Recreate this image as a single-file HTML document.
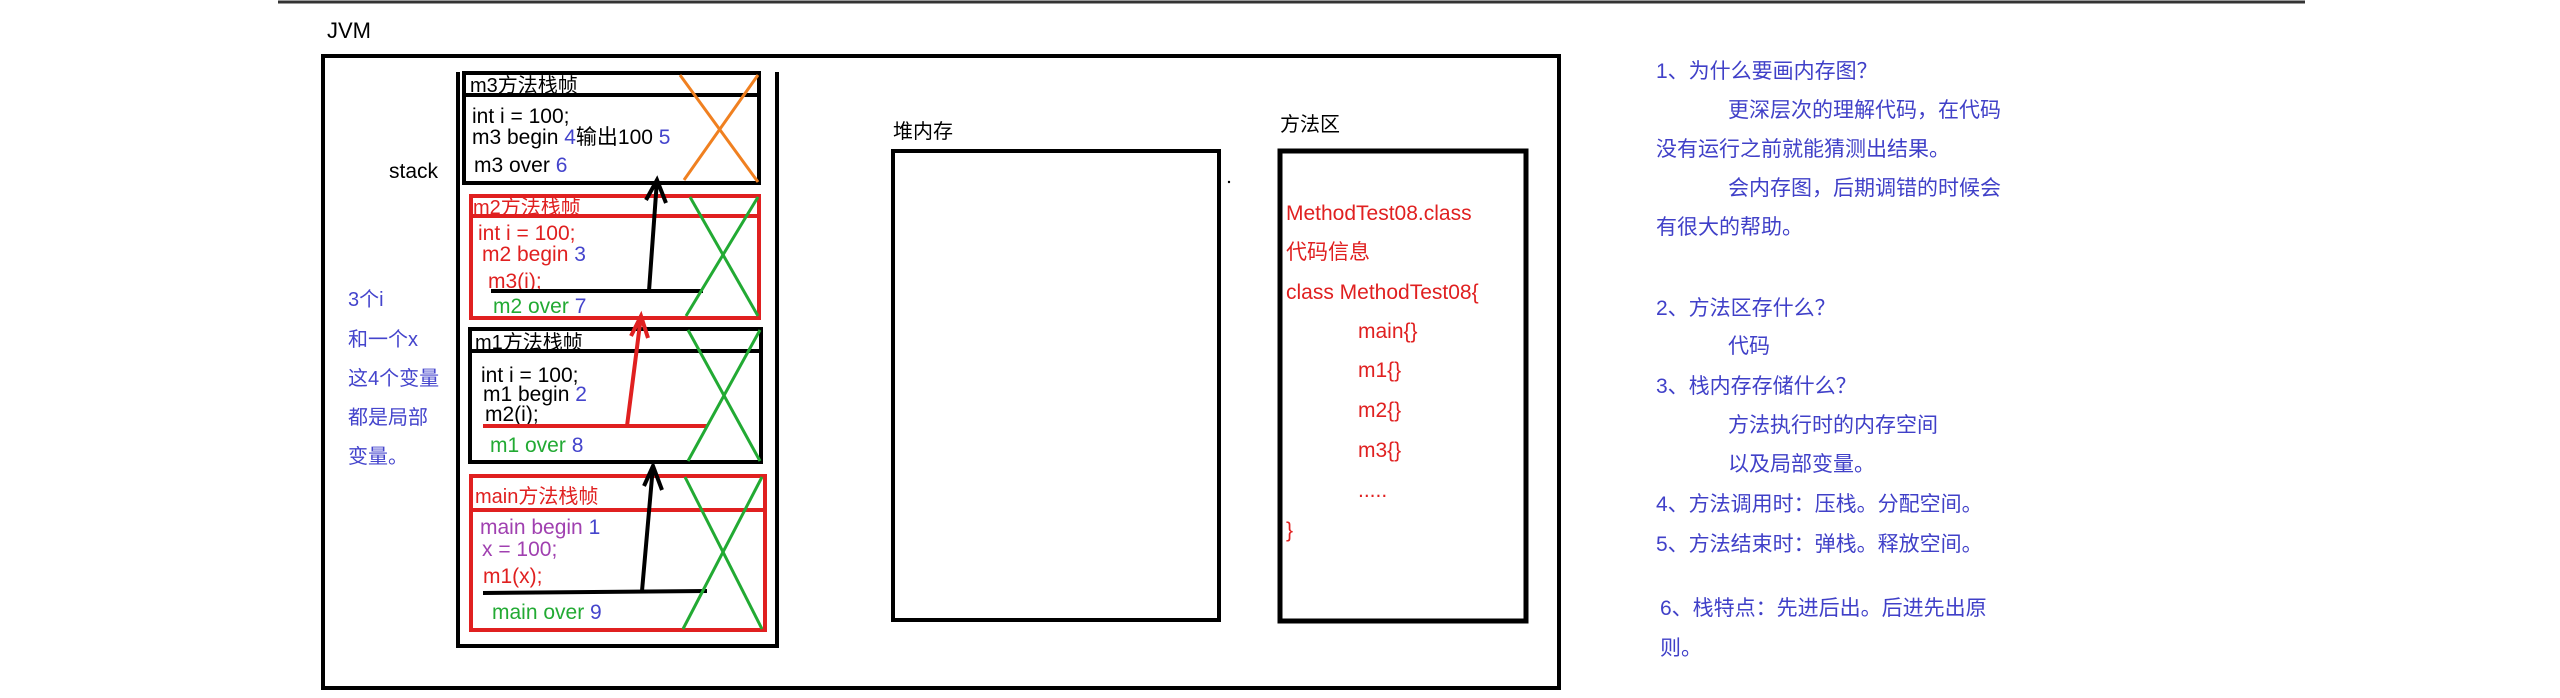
<!DOCTYPE html>
<html><head><meta charset="utf-8"><style>
html,body{margin:0;padding:0;background:#fff;}
svg{display:block}
text{font-family:"Liberation Sans","Noto Sans CJK SC",sans-serif;}
</style></head><body>
<svg width="2560" height="698" viewBox="0 0 2560 698" xmlns="http://www.w3.org/2000/svg">
<line x1="278" y1="2" x2="2305" y2="2" stroke="#333" stroke-width="3"/>
<text x="327" y="38" font-size="22" fill="#000">JVM</text>
<rect x="323" y="56" width="1236" height="632" fill="none" stroke="#000" stroke-width="4"/>
<polyline points="458,72 458,646 777,646 777,72" fill="none" stroke="#000" stroke-width="4"/>
<text x="389" y="178" font-size="21" fill="#000">stack</text>
<rect x="464" y="73" width="295" height="110" fill="none" stroke="#000" stroke-width="4"/>
<line x1="464" y1="95" x2="759" y2="95" stroke="#000" stroke-width="4"/>
<text x="470" y="92" font-size="20" fill="#000">m3方法栈帧</text>
<text x="472" y="123" font-size="21" fill="#000">int i = 100;</text>
<text x="472" y="144" font-size="21" fill="#000">m3 begin <tspan fill="#4444cc">4</tspan>输出100 <tspan fill="#4444cc">5</tspan></text>
<text x="474" y="172" font-size="21" fill="#000">m3 over  <tspan fill="#4444cc">6</tspan></text>
<line x1="680" y1="75" x2="758" y2="182" stroke="#f08020" stroke-width="3"/>
<line x1="758" y1="75" x2="684" y2="180" stroke="#f08020" stroke-width="3"/>
<rect x="471" y="196" width="288" height="122" fill="none" stroke="#e02020" stroke-width="4"/>
<line x1="471" y1="216" x2="759" y2="216" stroke="#e02020" stroke-width="4"/>
<text x="473" y="214" font-size="20" fill="#e02020">m2方法栈帧</text>
<text x="478" y="240" font-size="21" fill="#e02020">int i = 100;</text>
<text x="482" y="261" font-size="21" fill="#e02020">m2 begin  <tspan fill="#4444cc">3</tspan></text>
<text x="488" y="288" font-size="21" fill="#e02020">m3(i);</text>
<line x1="491" y1="291" x2="703" y2="291" stroke="#000" stroke-width="4"/>
<text x="493" y="313" font-size="21" fill="#22aa33">m2 over  <tspan fill="#4444cc">7</tspan></text>
<line x1="686" y1="316" x2="758" y2="197" stroke="#22aa33" stroke-width="3"/>
<line x1="690" y1="197" x2="758" y2="316" stroke="#22aa33" stroke-width="3"/>
<rect x="470" y="329" width="291" height="133" fill="none" stroke="#000" stroke-width="4"/>
<line x1="470" y1="351" x2="761" y2="351" stroke="#000" stroke-width="4"/>
<text x="475" y="349" font-size="20" fill="#000">m1方法栈帧</text>
<text x="481" y="382" font-size="21" fill="#000">int i = 100;</text>
<text x="483" y="401" font-size="21" fill="#000">m1 begin <tspan fill="#4444cc">2</tspan></text>
<text x="485" y="421" font-size="21" fill="#000">m2(i);</text>
<line x1="483" y1="426" x2="707" y2="426" stroke="#e02020" stroke-width="4"/>
<text x="490" y="452" font-size="21" fill="#22aa33">m1 over   <tspan fill="#4444cc">8</tspan></text>
<line x1="688" y1="330" x2="760" y2="461" stroke="#22aa33" stroke-width="3"/>
<line x1="760" y1="330" x2="688" y2="461" stroke="#22aa33" stroke-width="3"/>
<rect x="471" y="476" width="294" height="154" fill="none" stroke="#e02020" stroke-width="4"/>
<line x1="471" y1="510" x2="765" y2="510" stroke="#e02020" stroke-width="4"/>
<text x="475" y="503" font-size="20" fill="#e02020">main方法栈帧</text>
<text x="480" y="534" font-size="21" fill="#a040b0">main begin   <tspan fill="#4444cc">1</tspan></text>
<text x="482" y="556" font-size="21" fill="#a040b0">x = 100;</text>
<text x="483" y="583" font-size="21" fill="#e02020">m1(x);</text>
<line x1="483" y1="593" x2="707" y2="591" stroke="#000" stroke-width="4"/>
<text x="492" y="619" font-size="21" fill="#22aa33">main over   <tspan fill="#4444cc">9</tspan></text>
<line x1="683" y1="629" x2="762" y2="477" stroke="#22aa33" stroke-width="3"/>
<line x1="685" y1="477" x2="762" y2="629" stroke="#22aa33" stroke-width="3"/>
<path d="M649 291 L657 180 M646 200 L657 180 L666 203" fill="none" stroke="#000" stroke-width="4"/>
<path d="M627 426 L641 316 M631 336 L641 316 L648 338" fill="none" stroke="#e02020" stroke-width="4"/>
<path d="M642 591 L653 466 M644 486 L653 466 L662 490" fill="none" stroke="#000" stroke-width="4"/>
<g font-size="20" fill="#4444cc">
<text x="348" y="306">3个i</text>
<text x="348" y="346">和一个x</text>
<text x="348" y="385">这4个变量</text>
<text x="348" y="424">都是局部</text>
<text x="348" y="463">变量。</text>
</g>
<text x="893" y="138" font-size="20" fill="#000">堆内存</text>
<rect x="893" y="151" width="326" height="469" fill="none" stroke="#000" stroke-width="4"/>
<circle cx="1229" cy="182" r="1.2" fill="#000"/>
<text x="1280" y="131" font-size="20" fill="#000">方法区</text>
<rect x="1280" y="151" width="246" height="470" fill="none" stroke="#000" stroke-width="5"/>
<g font-size="21" fill="#e02020">
<text x="1286" y="220">MethodTest08.class</text>
<text x="1286" y="259">代码信息</text>
<text x="1286" y="299">class MethodTest08{</text>
<text x="1358" y="338">main{}</text>
<text x="1358" y="377">m1{}</text>
<text x="1358" y="417">m2{}</text>
<text x="1358" y="457">m3{}</text>
<text x="1358" y="497">.....</text>
<text x="1286" y="537">}</text>
</g>
<g font-size="21" fill="#4040c8">
<text x="1656" y="78">1、为什么要画内存图？</text>
<text x="1728" y="117">更深层次的理解代码，在代码</text>
<text x="1656" y="156">没有运行之前就能猜测出结果。</text>
<text x="1728" y="195">会内存图，后期调错的时候会</text>
<text x="1656" y="234">有很大的帮助。</text>
<text x="1656" y="315">2、方法区存什么？</text>
<text x="1728" y="353">代码</text>
<text x="1656" y="393">3、栈内存存储什么？</text>
<text x="1728" y="432">方法执行时的内存空间</text>
<text x="1728" y="471">以及局部变量。</text>
<text x="1656" y="511">4、方法调用时：压栈。分配空间。</text>
<text x="1656" y="551">5、方法结束时：弹栈。释放空间。</text>
<text x="1660" y="615">6、栈特点：先进后出。后进先出原</text>
<text x="1660" y="655">则。</text>
</g>
</svg>
</body></html>
